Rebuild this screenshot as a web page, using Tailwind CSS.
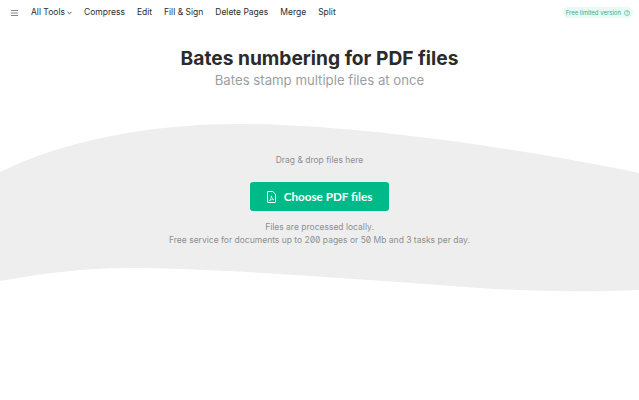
<!DOCTYPE html>
<html lang="en">
<head>
    <meta charset="UTF-8">
    <meta name="viewport" content="width=device-width, initial-scale=1.0">
    <title>Bates numbering for PDF files</title>
    <script src="https://cdn.jsdelivr.net/npm/@tailwindcss/browser@4"></script>
</head>
<body class="bg-white font-['Inter',sans-serif] [font-feature-settings:'zero'] overflow-hidden">
    <header class="h-[25px] flex items-center pl-[11px] pr-[6px] text-[8.5px] text-[#2d2d2d]">
        <button class="mr-[13px] text-[#888]">
            <svg class="w-[7px] h-[6px] block" viewBox="0 0 7 6" fill="none" stroke="currentColor" stroke-width="1">
                <path d="M0 .5h7M0 3h7M0 5.5h7"></path>
            </svg>
        </button>
        <nav class="flex items-center gap-[12px]">
            <a href="#" class="flex items-center gap-[2px]">All Tools
                <svg class="w-[5px] h-[4px]" viewBox="0 0 5 4" fill="none" stroke="currentColor" stroke-width=".8"><path d="M.4.8l2.1 2.1L4.6.8"></path></svg>
            </a>
            <a href="#">Compress</a>
            <a href="#">Edit</a>
            <a href="#">Fill &amp; Sign</a>
            <a href="#">Delete Pages</a>
            <a href="#">Merge</a>
            <a href="#">Split</a>
        </nav>
        <div class="ml-auto h-[11px] px-[3px] rounded-full bg-[#e9f9f3] text-[#3fa987] text-[6px] flex items-center gap-[3px]">
            Free limited version
            <svg class="w-[6px] h-[6px]" viewBox="0 0 8 8" fill="none" stroke="currentColor" stroke-width=".7">
                <circle cx="4" cy="4" r="3.4"></circle>
                <path d="M2.9 3.1c0-1.4 2.3-1.4 2.3 0 0 .8-1.1.8-1.1 1.6M4.1 5.6v.5"></path>
            </svg>
        </div>
    </header>

    <section class="pt-[20px] text-center">
        <h1 class="text-[19.2px] leading-[26px] font-bold text-[#2b2b2b]">Bates numbering for PDF files</h1>
        <p class="text-[13.2px] leading-[18px] text-[#9aa0a4]">Bates stamp multiple files at once</p>
    </section>

    <main class="relative mt-[35px] h-[170px]">
        <svg class="absolute left-0 top-0 w-[639px] h-[170px]" viewBox="0 124 639 170" preserveAspectRatio="none">
            <path fill="#eeeeee" d="M0 172C60 143 140 124 240 124C350 124 520 148 639 173V290C590 292 540 292 480 288C380 281 220 268 130 268C80 268 40 274 0 281Z"></path>
        </svg>
        <div class="relative flex flex-col items-center pt-[30px] text-[#8f8f8f] text-[8.5px]">
            <p class="leading-[12px]">Drag &amp; drop files here</p>
            <button class="mt-[16px] w-[139px] h-[29px] rounded-[3px] bg-[#00b988] text-white text-[11.7px] font-['Lato',sans-serif] font-bold flex items-center justify-center gap-[8px]">
                <svg class="w-[9px] h-[12px]" viewBox="0 0 9 12" fill="none" stroke="currentColor" stroke-width="1" stroke-linejoin="round">
                    <path d="M.5 1a.5.5 0 0 1 .5-.5h4.8L8.5 3.2V11a.5.5 0 0 1-.5.5H1a.5.5 0 0 1-.5-.5z"></path>
                    <path d="M2.3 9.7c1.2-.9 2-2.7 2-4.8 .5 1.9 1.3 3 2.5 3.8-1.7-.3-3.2 0-4.5 1z" stroke-width=".7"></path>
                </svg>
                Choose PDF files
            </button>
            <p class="mt-[10px] leading-[13px]">Files are processed locally.</p>
            <p class="leading-[13px]">Free service for documents up to 200 pages or 50 Mb and 3 tasks per day.</p>
        </div>
    </main>
</body>
</html>
